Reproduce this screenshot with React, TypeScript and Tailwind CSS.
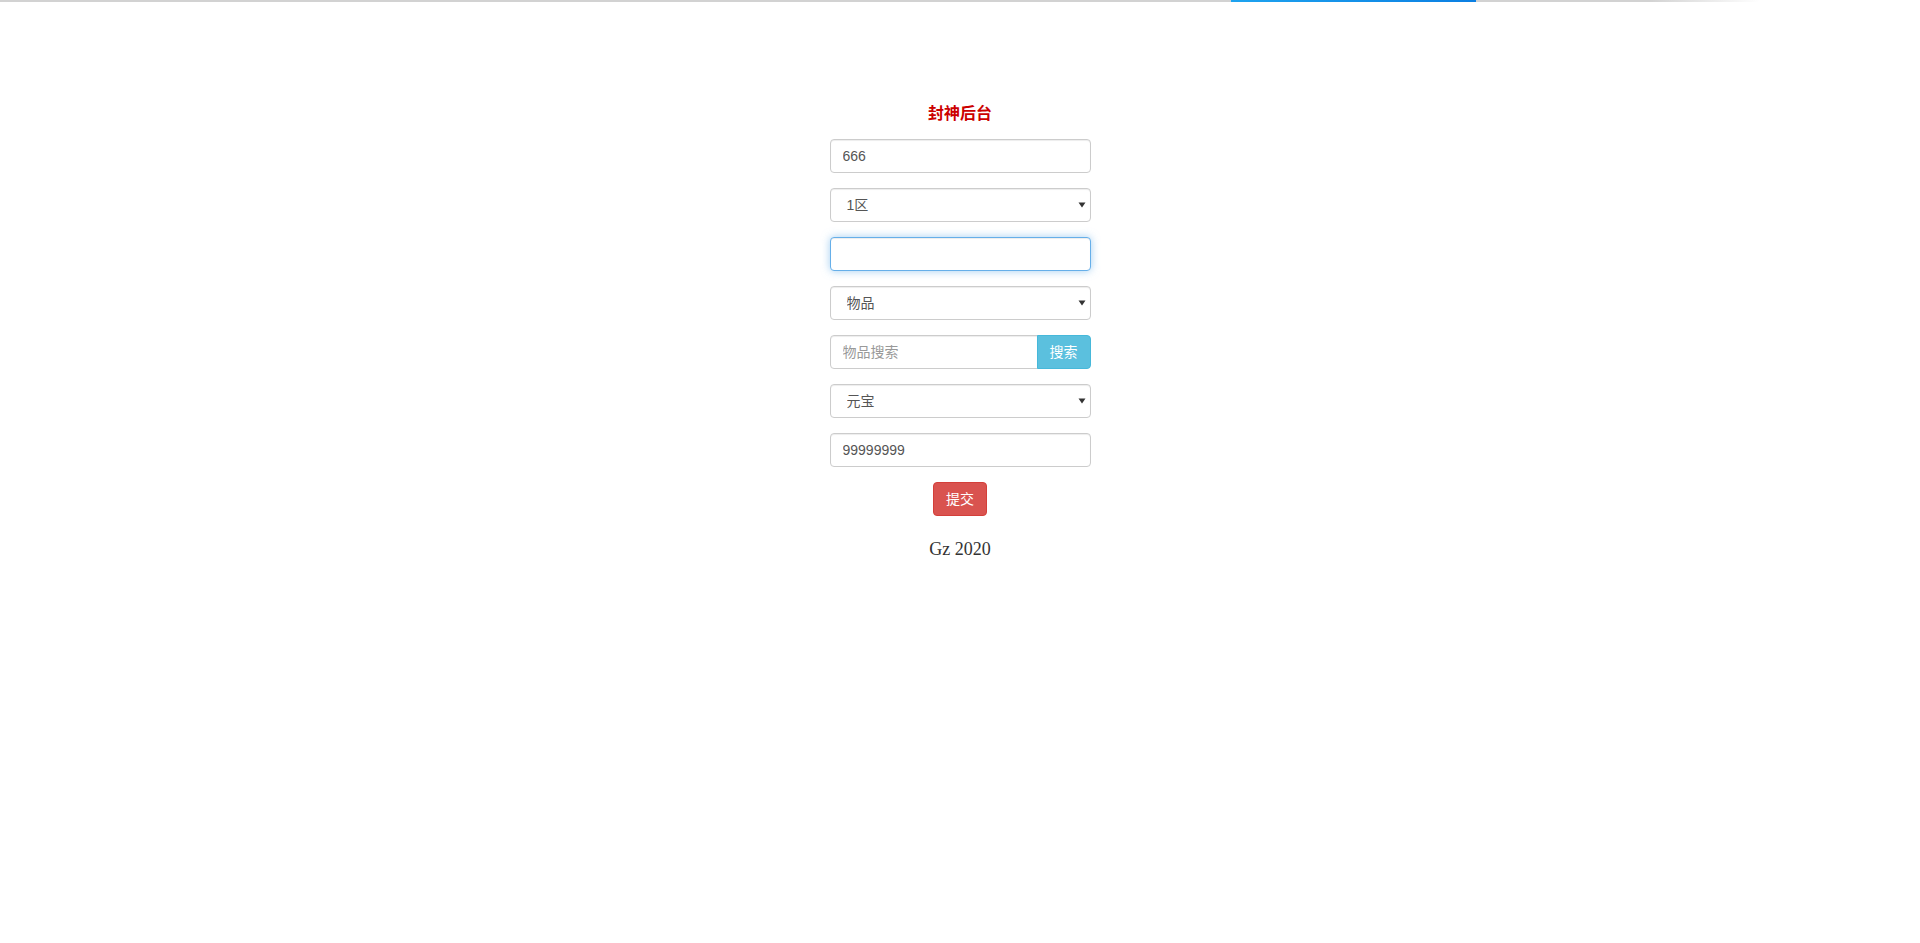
import { useState } from "react";

const fieldBase =
  "w-full h-[34px] px-[12px] text-[14px] text-[#555] bg-white border rounded-[4px] outline-none placeholder:text-[#999]";
const inputBase = `${fieldBase} border-[#ccc] shadow-[inset_0_1px_1px_rgba(0,0,0,0.075)]`;
const focusedInput = `${fieldBase} border-[#66afe9] shadow-[inset_0_1px_1px_rgba(0,0,0,0.075),0_0_8px_rgba(102,175,233,0.6)]`;

const Caret = () => (
  <svg
    width="8"
    height="6"
    viewBox="0 0 8 6"
    className="absolute right-[5px] top-[14px] pointer-events-none"
  >
    <path d="M0.5 0.5 L7.5 0.5 L4 5.5 Z" fill="#333" />
  </svg>
);

const SelectBox = ({ value, options }: { value: string; options: string[] }) => (
  <div className="relative w-full">
    <select
      defaultValue={value}
      className={`${inputBase} appearance-none pl-[16px] text-[#333]`}
    >
      {options.map((o) => (
        <option key={o}>{o}</option>
      ))}
    </select>
    <Caret />
  </div>
);

const App = () => {
  const [account, setAccount] = useState("666");
  const [amount, setAmount] = useState("99999999");

  return (
    <div className="min-h-[943px] bg-white font-['Liberation_Sans','Noto_Sans_CJK_SC',sans-serif]">
      {/* loading bar */}
      <div className="flex h-[2px] w-full">
        <div className="w-[1231px] bg-[#d2d2d2]" />
        <div className="w-[245px] bg-[linear-gradient(to_right,#1ea3ef,#0b7fe2)]" />
        <div className="flex-1 bg-[linear-gradient(to_right,#d2d2d2_0%,#d2d2d2_39%,#ffffff_64%)]" />
      </div>

      <div className="w-[261px] mx-auto pt-[99px] flex flex-col">
        <h4 className="text-center text-[16px] leading-[22px] font-bold text-[#c00] font-['Noto_Sans_CJK_SC',sans-serif] mb-[16px]">
          封神后台
        </h4>

        <div className="flex flex-col gap-[15px]">
          <input
            className={inputBase}
            value={account}
            onChange={(e) => setAccount(e.target.value)}
          />
          <SelectBox value="1区" options={["1区", "2区", "3区"]} />
          <input className={focusedInput} />
          <SelectBox value="物品" options={["物品", "装备"]} />
          <div className="flex w-full">
            <input
              className={`${inputBase} flex-1 rounded-r-none`}
              placeholder="物品搜索"
            />
            <button className="h-[34px] px-[12px] text-[14px] text-white bg-[#5bc0de] border border-[#46b8da] rounded-r-[4px] -ml-px">
              搜索
            </button>
          </div>
          <SelectBox value="元宝" options={["元宝", "金币"]} />
          <input
            className={inputBase}
            value={amount}
            onChange={(e) => setAmount(e.target.value)}
          />
          <div className="flex justify-center">
            <button className="h-[34px] px-[12px] text-[14px] text-white bg-[#d9534f] border border-[#d43f3a] rounded-[4px]">
              提交
            </button>
          </div>
        </div>

        <p className="mt-[20px] text-center text-[18px] leading-[26px] text-[#333] font-['Liberation_Serif',serif]">
          Gz 2020
        </p>
      </div>
    </div>
  );
};

export default App;
